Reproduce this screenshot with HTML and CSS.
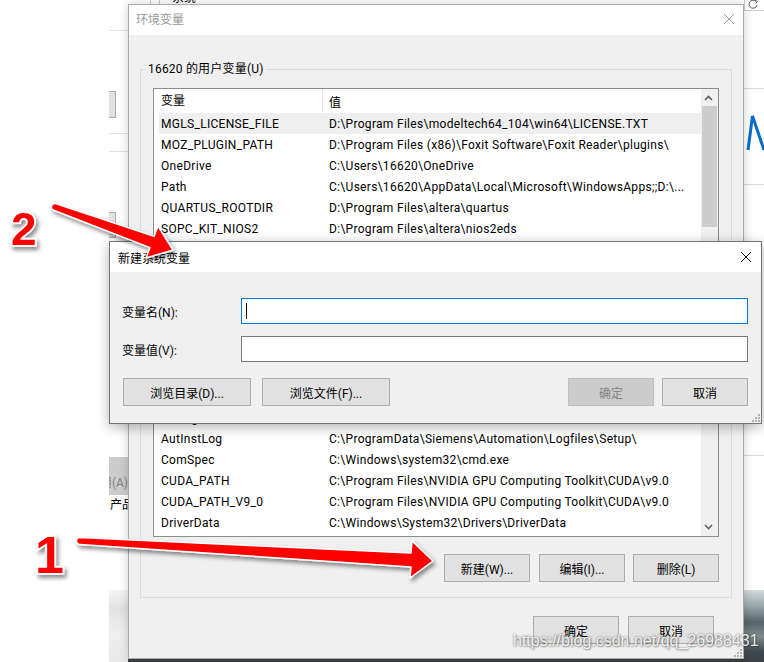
FILE: index.html
```html
<!DOCTYPE html>
<html lang="zh-CN">
<head>
    <meta charset="UTF-8">
    <meta name="viewport" content="width=device-width, initial-scale=1.0">
    <title>新建系统变量</title>
    <link rel="stylesheet" href="styles.css">
</head>
<body>
    <div class="desktop">

        <!-- the settings window behind the dialogs -->
        <div class="bg-window">
            <div class="bg-left">
                <div class="bg-top-rule"></div>
                <div class="bg-btn bg-btn-1"></div>
                <div class="bg-rule bg-rule-1"></div>
                <div class="bg-rule bg-rule-2"></div>
                <div class="bg-btn bg-btn-2"></div>
                <div class="bg-apply"><span>应用(A)</span></div>
                <div class="bg-text">产品</div>
                <div class="bg-floor"></div>
            </div>
            <div class="bg-mid">
                <div class="bg-mid-top"><span class="bg-tab"></span><span class="bg-mid-title">系统</span></div>
                <div class="bg-photo"></div>
            </div>
            <div class="bg-right">
                <div class="bg-toolbar">
                    <svg width="19" height="10" viewBox="0 0 19 10"><path d="M11 1.5 A4 4 0 1 0 12 5" fill="none" stroke="#555" stroke-width="1"/><path d="M10 0 L12.5 1.5 L10.5 3.5" fill="none" stroke="#555" stroke-width="1"/></svg>
                </div>
                <div class="bg-line line-a"></div>
                <svg class="bg-logo" width="20" height="36" viewBox="0 0 20 36"><polyline points="4,35 8.5,1 20,35" fill="none" stroke="#0a6cc8" stroke-width="3"/></svg>
                <div class="bg-line line-b"></div>
                <div class="bg-line line-c"></div>
                <div class="bg-photo"></div>
            </div>
        </div>

        <!-- 环境变量 -->
        <div class="window env-window">
            <div class="titlebar inactive">
                <span class="title">环境变量</span>
                <svg class="close" width="10" height="10" viewBox="0 0 10 10"><path d="M0 0 L10 10 M10 0 L0 10" stroke="currentColor" stroke-width="1"/></svg>
            </div>
            <div class="env-body">
                <fieldset class="group user-group">
                    <legend>16620 的用户变量(U)</legend>
                    <div class="listview user-list">
                        <div class="list-main">
                            <div class="list-head"><span class="head-name">变量</span><span class="head-value">值</span></div>
                            <div class="list-rows">
                                <div class="row selected"><span class="col-name">MGLS_LICENSE_FILE</span><span class="col-value">D:\Program Files\modeltech64_104\win64\LICENSE.TXT</span></div>
                                <div class="row"><span class="col-name">MOZ_PLUGIN_PATH</span><span class="col-value">D:\Program Files (x86)\Foxit Software\Foxit Reader\plugins\</span></div>
                                <div class="row"><span class="col-name">OneDrive</span><span class="col-value">C:\Users\16620\OneDrive</span></div>
                                <div class="row"><span class="col-name">Path</span><span class="col-value">C:\Users\16620\AppData\Local\Microsoft\WindowsApps;;D:\...</span></div>
                                <div class="row"><span class="col-name">QUARTUS_ROOTDIR</span><span class="col-value">D:\Program Files\altera\quartus</span></div>
                                <div class="row"><span class="col-name">SOPC_KIT_NIOS2</span><span class="col-value">D:\Program Files\altera\nios2eds</span></div>
                                <div class="row"><span class="col-name">TEMP</span><span class="col-value">C:\Users\16620\AppData\Local\Temp</span></div>
                            </div>
                        </div>
                        <div class="scrollbar">
                            <div class="sb-arrow"><svg width="17" height="17" viewBox="0 0 17 17"><polyline points="4,11 7.5,7.5 11,11" fill="none" stroke="#606060" stroke-width="1.6"/></svg></div>
                            <div class="sb-thumb user-thumb"></div>
                            <div class="sb-track"></div>
                        </div>
                    </div>
                    <div class="group-buttons">
                        <button class="btn">新建(N)...</button>
                        <button class="btn">编辑(E)...</button>
                        <button class="btn">删除(D)</button>
                    </div>
                </fieldset>

                <fieldset class="group system-group">
                    <legend>系统变量(S)</legend>
                    <div class="listview system-list">
                        <div class="list-main">
                            <div class="list-head"><span class="head-name">变量</span><span class="head-value">值</span></div>
                            <div class="list-rows scrolled">
                                <div class="row"><span class="col-name">ALTERA_ROOTDIR</span><span class="col-value">D:\Program Files\altera\quartus</span></div>
                                <div class="row"><span class="col-name">asl.log</span><span class="col-value">Destination=file</span></div>
                                <div class="row"><span class="col-name">AutInstLog</span><span class="col-value">C:\ProgramData\Siemens\Automation\Logfiles\Setup\</span></div>
                                <div class="row"><span class="col-name">ComSpec</span><span class="col-value">C:\Windows\system32\cmd.exe</span></div>
                                <div class="row"><span class="col-name">CUDA_PATH</span><span class="col-value">C:\Program Files\NVIDIA GPU Computing Toolkit\CUDA\v9.0</span></div>
                                <div class="row"><span class="col-name">CUDA_PATH_V9_0</span><span class="col-value">C:\Program Files\NVIDIA GPU Computing Toolkit\CUDA\v9.0</span></div>
                                <div class="row"><span class="col-name">DriverData</span><span class="col-value">C:\Windows\System32\Drivers\DriverData</span></div>
                            </div>
                        </div>
                        <div class="scrollbar">
                            <div class="sb-arrow"><svg width="17" height="17" viewBox="0 0 17 17"><polyline points="4,11 7.5,7.5 11,11" fill="none" stroke="#606060" stroke-width="1.6"/></svg></div>
                            <div class="sb-thumb system-thumb"></div>
                            <div class="sb-track"></div>
                            <div class="sb-arrow"><svg width="17" height="17" viewBox="0 0 17 17"><polyline points="4,6 7.5,9.5 11,6" fill="none" stroke="#606060" stroke-width="1.6"/></svg></div>
                        </div>
                    </div>
                    <div class="group-buttons">
                        <button class="btn">新建(W)...</button>
                        <button class="btn">编辑(I)...</button>
                        <button class="btn">删除(L)</button>
                    </div>
                </fieldset>

                <div class="dialog-buttons">
                    <button class="btn">确定</button>
                    <button class="btn">取消</button>
                </div>
            </div>
            <svg class="grip" width="10" height="10" viewBox="0 0 10 10"><path d="M8 2h2v2h-2z M5 5h2v2h-2z M8 5h2v2h-2z M2 8h2v2h-2z M5 8h2v2h-2z M8 8h2v2h-2z" fill="#b4b4b4"/></svg>
        </div>

        <!-- 新建系统变量 -->
        <div class="window new-window">
            <div class="titlebar">
                <span class="title">新建系统变量</span>
                <svg class="close" width="10" height="10" viewBox="0 0 10 10"><path d="M0 0 L10 10 M10 0 L0 10" stroke="currentColor" stroke-width="1"/></svg>
            </div>
            <div class="new-body">
                <div class="form">
                    <label class="field-label">变量名(N):</label>
                    <div class="textbox focused"><span class="caret"></span></div>
                    <label class="field-label">变量值(V):</label>
                    <div class="textbox"></div>
                </div>
                <div class="new-buttons">
                    <button class="btn btn-wide">浏览目录(D)...</button>
                    <button class="btn btn-wide">浏览文件(F)...</button>
                    <button class="btn btn-ok" disabled>确定</button>
                    <button class="btn">取消</button>
                </div>
            </div>
            <svg class="grip" width="10" height="10" viewBox="0 0 10 10"><path d="M8 2h2v2h-2z M5 5h2v2h-2z M8 5h2v2h-2z M2 8h2v2h-2z M5 8h2v2h-2z M8 8h2v2h-2z" fill="#b4b4b4"/></svg>
        </div>

        <!-- red annotations drawn on the screenshot -->
        <svg class="annotations" width="764" height="662" viewBox="0 0 764 662">
            <defs>
                <filter id="arrow-shadow" x="-20%" y="-60%" width="140%" height="220%">
                    <feDropShadow dx="2" dy="3" stdDeviation="2" flood-color="#000" flood-opacity="0.45"/>
                </filter>
            </defs>
            <path class="arrow" d="M80 537.5 L411 553 L412 541 L433 561 L410 578 L411 567 L80 544.5 A3.5 3.5 0 0 1 80 537.5 Z"/>
            <path class="arrow" d="M56.2 203.7 L154 236.4 L158 226 L173 250 L146 258 L150 247.6 L53.8 210.3 A3.5 3.5 0 0 1 56.2 203.7 Z"/>
        </svg>
        <div class="step-num step-2">2</div>
        <div class="step-num step-1">1</div>

        <div class="watermark">https://blog.csdn.net/qq_26988431</div>
    </div>
</body>
</html>
```

FILE: styles.css
```css
* {
    box-sizing: border-box;
}
body {
    margin: 0;
    width: 764px;
    height: 662px;
    overflow: hidden;
    background-color: #ffffff;
    font-family: Roboto, "Noto Sans CJK SC", sans-serif;
    font-size: 12px;
    color: #000;
}
.desktop {
    position: relative;
    width: 764px;
    height: 662px;
    overflow: hidden;
}

/* background window */
.bg-window {
    position: absolute;
    left: 109px;
    top: 0;
    width: 655px;
    height: 662px;
    display: flex;
    background: #fff;
    overflow: hidden;
}
.bg-left {
    width: 19px;
    flex: none;
}
.bg-top-rule {
    height: 31px;
    border-bottom: 1px solid #e3e3e3;
}
.bg-btn {
    width: 7px;
    background: #e1e1e1;
    border: 1px solid #adadad;
    border-left: none;
}
.bg-btn-1 {
    margin-top: 60px;
    height: 27px;
}
.bg-btn-2 {
    margin-top: 60px;
    height: 26px;
}
.bg-rule {
    height: 1px;
    background: #e3e3e3;
}
.bg-rule-1 {
    margin-top: 15px;
}
.bg-rule-2 {
    margin-top: 17px;
}
.bg-apply {
    margin-top: 219px;
    height: 38px;
    padding-top: 11px;
    background: #cccccc;
    color: #838383;
    display: flex;
    justify-content: flex-end;
    align-items: center;
    white-space: nowrap;
}
.bg-text {
    margin-top: 3px;
    line-height: 14px;
    white-space: nowrap;
    margin-left: 1px;
}
.bg-floor {
    margin-top: 78px;
    height: 72px;
    background: linear-gradient(#f5f5f5, #e2e2e2 25%, #efefef 60%, #e8e8e8);
}
.bg-mid {
    width: 616px;
    flex: none;
    display: flex;
    flex-direction: column;
}
.bg-mid-top {
    height: 4px;
    overflow: hidden;
    display: flex;
    align-items: flex-end;
    padding-left: 22px;
    gap: 12px;
}
.bg-tab {
    width: 10px;
    height: 4px;
    flex: none;
    border-left: 1px solid #c8c8c8;
    border-right: 1px solid #c8c8c8;
}
.bg-mid-title {
    flex: none;
    line-height: 14px;
    margin-bottom: -1px;
}
.bg-photo {
    margin-top: auto;
    height: 72px;
    background: linear-gradient(#d3dbdc 0%, #9aa7aa 22%, #56646b 45%, #7d8b8f 65%, #3e4a50 85%, #3a3f42 100%);
}
.bg-right {
    width: 20px;
    flex: none;
    display: flex;
    flex-direction: column;
}
.bg-toolbar {
    height: 11px;
    border-left: 1px solid #d0d0d0;
    border-bottom: 1px solid #d0d0d0;
    display: flex;
    justify-content: center;
}
.bg-line {
    height: 1px;
    background: #dcdcdc;
}
.line-a {
    margin-top: 77px;
}
.bg-logo {
    display: block;
    margin-top: 26px;
}
.line-b {
    margin-top: 33px;
}
.line-c {
    margin-top: 270px;
}

/* windows */
.window {
    position: absolute;
    background: #f0f0f0;
}
.env-window {
    left: 128px;
    top: 4px;
    width: 616px;
    height: 655px;
    border: 1px solid #aaaaaa;
    box-shadow: 0 0 10px rgba(0, 0, 0, 0.18);
}
.new-window {
    left: 109px;
    top: 241px;
    width: 653px;
    height: 183px;
    border: 1px solid #747474;
    box-shadow: 0 3px 12px rgba(0, 0, 0, 0.3);
}
.titlebar {
    height: 30px;
    background: #fff;
    display: flex;
    justify-content: space-between;
    align-items: center;
}
.env-window .titlebar {
    padding: 0 9px 3px 7px;
}
.new-window .titlebar {
    padding: 0 10px 0 8px;
}
.titlebar.inactive {
    color: #999;
}
.close {
    display: block;
}
.grip {
    position: absolute;
    right: 1px;
    bottom: 1px;
}

/* environment dialog body */
.env-body {
    padding: 0 11px;
}
.group {
    margin: 0;
    padding: 0 12px 15px;
    border: 1px solid #dcdcdc;
    min-width: 0;
}
.group legend {
    margin-left: -7px;
    padding: 0 2px;
    line-height: 16px;
    letter-spacing: 0.2px;
}
.user-group {
    margin-top: 26px;
}
.system-group {
    margin-top: 5px;
}
.listview {
    margin-top: 11px;
    border: 1px solid #8c8c8c;
    background: #fff;
    display: flex;
}
.user-list {
    height: 170px;
}
.system-list {
    height: 186px;
}
.list-main {
    flex: 1;
    min-width: 0;
    display: flex;
    flex-direction: column;
}
.list-head {
    height: 24px;
    flex: none;
    display: flex;
    align-items: center;
}
.head-name {
    width: 169px;
    height: 24px;
    line-height: 24px;
    padding-left: 7px;
    border-right: 1px solid #e5e5e5;
}
.head-value {
    padding-left: 6px;
}
.list-rows {
    flex: 1;
    min-height: 0;
    overflow: hidden;
    padding-left: 5px;
    display: flex;
    flex-direction: column;
}
.list-rows.scrolled {
    justify-content: flex-end;
    padding-bottom: 3px;
}
.row {
    height: 21px;
    flex: none;
    display: flex;
    align-items: center;
    white-space: nowrap;
    letter-spacing: 0.3px;
}
.row.selected {
    background: #efefef;
}
.col-name {
    width: 170px;
    flex: none;
    padding-left: 2px;
}
.col-value {
    overflow: hidden;
}
.scrollbar {
    width: 17px;
    flex: none;
    background: #f0f0f0;
    display: flex;
    flex-direction: column;
}
.sb-arrow {
    height: 17px;
    flex: none;
}
.sb-arrow svg {
    display: block;
}
.sb-thumb {
    margin: 0 1px;
    background: #cdcdcd;
    flex: none;
}
.user-thumb {
    height: 121px;
}
.system-thumb {
    height: 40px;
}
.sb-track {
    flex: 1;
}
.group-buttons {
    margin-top: 17px;
    display: flex;
    justify-content: flex-end;
    gap: 8px;
}
.group-buttons .btn:first-child {
    margin-right: 1px;
}
.dialog-buttons {
    margin: 18px 18px 0 0;
    display: flex;
    justify-content: flex-end;
    gap: 9px;
}

/* buttons */
.btn {
    width: 86px;
    height: 28px;
    padding: 0;
    border: 1px solid #adadad;
    background: #e1e1e1;
    font: inherit;
    color: #000;
}
.btn-wide {
    width: 128px;
}
.btn:disabled {
    background: #cccccc;
    border-color: #bfbfbf;
    color: #838383;
}

/* new variable dialog body */
.new-body {
    padding: 26px 13px 17px 12px;
}
.form {
    display: grid;
    grid-template-columns: 119px 1fr;
    row-gap: 12px;
    align-items: center;
}
.textbox {
    height: 26px;
    background: #fff;
    border: 1px solid #7a7a7a;
    padding: 4px 0 0 4px;
}
.textbox.focused {
    border-color: #0078d7;
}
.caret {
    display: block;
    width: 1px;
    height: 16px;
    background: #000;
}
.new-buttons {
    margin-top: 16px;
    display: flex;
    gap: 11px;
}
.new-buttons .btn:first-child {
    margin-left: 1px;
}
.btn-ok {
    margin-left: auto;
    margin-right: -3px;
}

/* annotations */
.annotations {
    position: absolute;
    left: 0;
    top: 0;
    pointer-events: none;
}
.arrow {
    fill: #ff0000;
    stroke: #fff;
    stroke-width: 1.5;
    stroke-linejoin: round;
    filter: url(#arrow-shadow);
}
.step-num {
    position: absolute;
    font-family: "Liberation Sans", Arial, sans-serif;
    font-weight: bold;
    line-height: 1;
    color: #ff0000;
    -webkit-text-stroke: 4px #fff;
    paint-order: stroke fill;
    filter: drop-shadow(2px 3px 2px rgba(0, 0, 0, 0.45));
}
.step-2 {
    left: 11px;
    top: 206px;
    font-size: 46px;
}
.step-1 {
    left: 35px;
    top: 529px;
    font-size: 52px;
}
.watermark {
    position: absolute;
    left: 513px;
    top: 633px;
    font-family: "Liberation Sans", Arial, sans-serif;
    font-size: 16px;
    line-height: 1;
    white-space: nowrap;
    color: rgba(255, 255, 255, 0.9);
    text-shadow: 0 0 2px rgba(0, 0, 0, 0.6), 1px 1px 2px rgba(0, 0, 0, 0.3);
}
```
